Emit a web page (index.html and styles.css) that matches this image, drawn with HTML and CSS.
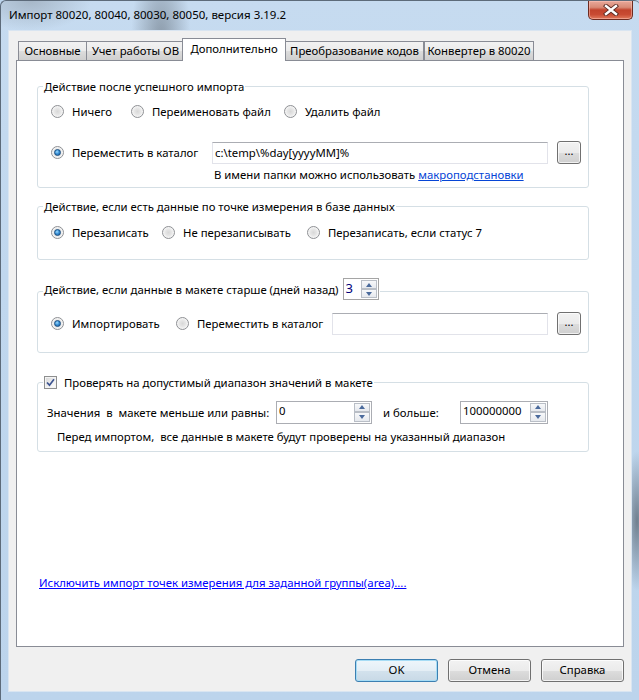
FILE: index.html
```html
<!DOCTYPE html>
<html lang="ru">
<head>
<meta charset="utf-8">
<title>Импорт</title>
<link rel="stylesheet" href="styles.css">
</head>
<body>
<div class="window">
  <div class="titlebar">
    <span class="title">Импорт 80020, 80040, 80030, 80050, версия 3.19.2</span>
    <div class="close">
      <svg width="16" height="12" viewBox="0 0 16 12">
        <path d="M3 2 L13 10 M13 2 L3 10" stroke="#5a2a22" stroke-width="4.2" stroke-linecap="square"/>
        <path d="M3 2 L13 10 M13 2 L3 10" stroke="#ffffff" stroke-width="2.4" stroke-linecap="square"/>
      </svg>
    </div>
  </div>
  <div class="client">
    <div class="tabs">
      <div class="tab t1">Основные</div>
      <div class="tab t2">Учет работы ОВ</div>
      <div class="tab active">Дополнительно</div>
      <div class="tab t4">Преобразование кодов</div>
      <div class="tab t5">Конвертер в 80020</div>
    </div>
    <div class="panel">
      <div class="group g1">
        <div class="legend">Действие после успешного импорта</div>
        <div class="row r1">
          <label class="opt w80"><span class="radio"></span><span>Ничего</span></label>
          <label class="opt w153"><span class="radio"></span><span>Переименовать файл</span></label>
          <label class="opt"><span class="radio"></span><span>Удалить файл</span></label>
        </div>
        <div class="row r2">
          <label class="opt w161"><span class="radio on"></span><span>Переместить в каталог</span></label>
          <div class="input wide">c:\temp\%day[yyyyMM]%</div>
          <div class="dots">...</div>
        </div>
        <div class="hint">В имени папки можно использовать <a class="macro" href="#">макроподстановки</a></div>
      </div>

      <div class="group g2">
        <div class="legend">Действие, если есть данные по точке измерения в базе данных</div>
        <div class="row r3">
          <label class="opt w111"><span class="radio on"></span><span>Перезаписать</span></label>
          <label class="opt w145"><span class="radio"></span><span>Не перезаписывать</span></label>
          <label class="opt"><span class="radio"></span><span>Перезаписать, если статус 7</span></label>
        </div>
      </div>

      <div class="group g3">
        <div class="legend tall"><span>Действие, если данные в макете старше (дней назад)</span>
          <div class="spin days"><span class="val">3</span><span class="spinbtns"><span class="sb up"></span><span class="sb down"></span></span></div>
        </div>
        <div class="row r4">
          <label class="opt w125"><span class="radio on"></span><span>Импортировать</span></label>
          <label class="opt w156"><span class="radio"></span><span>Переместить в каталог</span></label>
          <div class="input wide2"></div>
          <div class="dots">...</div>
        </div>
      </div>

      <div class="group g4">
        <div class="legend chk">
          <span class="checkbox"><svg width="9" height="9" viewBox="0 0 9 9"><path d="M1 4.5 L3.5 7.2 L8 1.2" fill="none" stroke="#3e5591" stroke-width="1.7"/></svg></span>
          <span>Проверять на допустимый диапазон значений в макете</span>
        </div>
        <div class="row r5">
          <span class="lbl1">Значения&nbsp; в&nbsp; макете меньше или равны:</span>
          <div class="spin s1"><span class="val">0</span><span class="spinbtns"><span class="sb up"></span><span class="sb down"></span></span></div>
          <span class="lbl2">и больше:</span>
          <div class="spin s2"><span class="val">100000000</span><span class="spinbtns"><span class="sb up"></span><span class="sb down"></span></span></div>
        </div>
        <div class="note">Перед импортом,&nbsp; все данные в макете будут проверены на указанный диапазон</div>
      </div>

      <a class="bottomlink" href="#">Исключить импорт точек измерения для заданной группы(area)....</a>
    </div>
    <div class="buttons">
      <div class="btn default">OK</div>
      <div class="btn">Отмена</div>
      <div class="btn">Справка</div>
    </div>
  </div>
</div>
</body>
</html>
```
FILE: styles.css
```css
html, body {
  margin: 0;
  padding: 0;
  overflow: hidden;
  background: #bcd4ec;
}
body {
  font-family: "Noto Sans", "Open Sans", sans-serif;
  font-size: 11.35px;
  color: #000;
}
.window {
  width: 640px;
  height: 700px;
  box-sizing: border-box;
  display: flex;
  flex-direction: column;
  padding: 0 0 8px 0;
  border-left: 1px solid #5d6b7a;
  border-top: 1px solid #5d6b7a;
  border-radius: 6px 6px 0 0;
  background:
    radial-gradient(ellipse 30px 90px at 160px 40px, rgba(90,100,110,0.55), rgba(90,100,110,0) 100%),
    radial-gradient(ellipse 14px 70px at 636px 520px, rgba(60,70,80,0.6), rgba(60,70,80,0) 100%),
    radial-gradient(ellipse 60px 30px at 30px 0px, rgba(120,130,140,0.4), rgba(120,130,140,0) 100%),
    linear-gradient(180deg, #c6dbf0 0%, #c0d7ee 40%, #bcd4ec 100%);
}
.titlebar {
  height: 29px;
  display: flex;
  align-items: flex-start;
  justify-content: space-between;
  padding-left: 8px;
}
.title {
  margin-top: 6px;
  line-height: 16px;
  font-size: 11.5px;
  color: #000;
  white-space: nowrap;
}
.close {
  width: 45px;
  height: 19px;
  margin-right: 7px;
  box-sizing: border-box;
  border: 1px solid #6d2b20;
  border-top: none;
  border-radius: 0 0 5px 5px;
  background: linear-gradient(180deg, #e9a99a 0%, #d88a76 35%, #c2432c 50%, #c94b33 75%, #e07a5c 100%);
  box-shadow: inset 0 0 0 1px rgba(255,200,190,0.5);
  display: flex;
  align-items: center;
  justify-content: center;
}
.client {
  margin-left: 7px;
  width: 624px;
  height: 662px;
  box-sizing: border-box;
  border: 1px solid #d9e5f1;
  background: #f0f0f0;
  display: flex;
  flex-direction: column;
  padding: 7px 7px 0 7px;
}
.tabs {
  display: flex;
  align-items: flex-end;
  height: 22px;
  padding-left: 2px;
  position: relative;
  z-index: 2;
}
.tab {
  height: 19px;
  box-sizing: border-box;
  border: 1px solid #898c95;
  border-bottom: none;
  background: linear-gradient(180deg, #f2f2f2 0%, #ebebeb 50%, #dddddd 51%, #cfcfcf 100%);
  line-height: 18px;
  padding: 0;
  text-align: center;
  white-space: nowrap;
  margin-right: -1px;
}
.tab.t1 { width: 69px; }
.tab.t2 { width: 99px; }
.tab.t4 { width: 139px; margin-left: 1px; }
.tab.t5 { width: 110px; margin-left: 1px; }
.tab.active {
  height: 23px;
  width: 104px;
  margin: 0 -2px -1px -2px;
  background: #fff;
  line-height: 20px;
  position: relative;
  z-index: 3;
  border-color: #898c95;
}
.panel {
  height: 587px;
  box-sizing: border-box;
  border: 1px solid #898c95;
  background: #fff;
  display: flex;
  flex-direction: column;
  position: relative;
  z-index: 1;
}
.group {
  margin-left: 20px;
  width: 552px;
  box-sizing: border-box;
  border: 1px solid #d5dfe5;
  border-radius: 3px;
  display: flex;
  flex-direction: column;
  flex: none;
}
.legend {
  display: flex;
  align-items: center;
  align-self: flex-start;
  background: #fff;
  height: 16px;
  margin: -9px 0 0 5px;
  padding: 0 1px;
  white-space: nowrap;
}
.legend.tall {
  height: 22px;
  margin-top: -14px;
  gap: 4px;
}
.legend.chk {
  gap: 7px;
  margin-left: 5px;
}
.g1 { margin-top: 25px; height: 102px; }
.g2 { margin-top: 18px; height: 54px; }
.g3 { margin-top: 31px; height: 62px; }
.g4 { margin-top: 29px; height: 70px; }
.row {
  display: flex;
  align-items: center;
  padding-left: 13px;
  flex: none;
}
.r1 { margin-top: 7px; height: 20px; }
.r2 { margin-top: 20px; height: 23px; }
.r3 { margin-top: 8px; height: 20px; }
.r4 { margin-top: 12px; height: 23px; }
.r5 { margin-top: 10px; height: 24px; padding-left: 9px; }
.opt {
  display: flex;
  align-items: center;
  gap: 8px;
  white-space: nowrap;
  flex: none;
}
.w80 { width: 80px; }
.w153 { width: 153px; }
.w161 { width: 161px; }
.w111 { width: 111px; }
.w145 { width: 145px; }
.w125 { width: 125px; }
.w156 { width: 156px; }
.radio {
  width: 13px;
  height: 13px;
  box-sizing: border-box;
  border-radius: 50%;
  border: 1px solid #8e9094;
  background: radial-gradient(circle at 50% 50%, #d8d8d8 0, #e6e6e6 40%, #f6f6f6 70%, #fbfbfb 100%);
  display: flex;
  align-items: center;
  justify-content: center;
  flex: none;
}
.radio.on::after {
  content: "";
  width: 7px;
  height: 7px;
  border-radius: 50%;
  box-sizing: border-box;
  border: 1px solid #1b4f82;
  background: radial-gradient(circle at 40% 35%, #9fdcff 0, #3c93d8 45%, #155a9c 100%);
}
.input {
  height: 22px;
  box-sizing: border-box;
  border: 1px solid #e2e3ea;
  border-top-color: #abadb3;
  border-left-color: #e2e3ea;
  background: #fff;
  padding-left: 2px;
  line-height: 20px;
  white-space: nowrap;
}
.wide { width: 336px; }
.wide2 { width: 216px; }
.dots {
  width: 24px;
  height: 23px;
  box-sizing: border-box;
  margin-left: 9px;
  border: 1px solid #707070;
  border-radius: 3px;
  background: linear-gradient(180deg, #f2f2f2 0%, #ebebeb 50%, #dddddd 51%, #cfcfcf 100%);
  box-shadow: inset 0 0 0 1px rgba(255,255,255,0.7);
  text-align: center;
  line-height: 17px;
  font-size: 11px;
}
.hint {
  margin-top: 3px;
  height: 16px;
  line-height: 16px;
  padding-left: 176px;
  white-space: nowrap;
}
.macro {
  color: #0645d6;
  text-decoration: underline;
}
.spin {
  height: 23px;
  box-sizing: border-box;
  border: 1px solid #abadb3;
  background: #fff;
  display: flex;
  justify-content: space-between;
  flex: none;
}
.spin .val {
  padding-left: 2px;
  line-height: 17px;
  color: #000;
}
.spin.days {
  width: 36px;
  height: 22px;
  border-color: #a5a5a5;
}
.spin.days .val { color: #00007a; font-size: 13px; line-height: 18px; }
.spinbtns {
  display: flex;
  flex-direction: column;
  width: 16px;
  padding: 1px 1px 1px 0;
  gap: 0;
}
.sb {
  flex: 1;
  box-sizing: border-box;
  border: 1px solid #b9bec6;
  background: linear-gradient(180deg, #f7f8fa 0%, #e6e9ee 100%);
  display: flex;
  align-items: center;
  justify-content: center;
}
.sb.up::after {
  content: "";
  border-left: 3.5px solid transparent;
  border-right: 3.5px solid transparent;
  border-bottom: 4px solid #4a6a9c;
}
.sb.down::after {
  content: "";
  border-left: 3.5px solid transparent;
  border-right: 3.5px solid transparent;
  border-top: 4px solid #4a6a9c;
}
.s1 { width: 96px; }
.s2 { width: 88px; }
.lbl1 { width: 229px; white-space: nowrap; flex: none; }
.lbl2 { width: 77px; margin-left: 11px; white-space: nowrap; flex: none; }
.checkbox {
  width: 13px;
  height: 13px;
  box-sizing: border-box;
  border: 1px solid #8e8f8f;
  background: linear-gradient(135deg, #d4d4d4 0%, #f2f2f2 60%, #ffffff 100%);
  box-shadow: inset 0 0 0 1px #f4f4f4;
  display: flex;
  align-items: center;
  justify-content: center;
  flex: none;
}
.note {
  margin-top: 5px;
  height: 16px;
  line-height: 16px;
  padding-left: 19px;
  white-space: nowrap;
}
.bottomlink {
  margin-top: 123px;
  margin-left: 22px;
  line-height: 16px;
  color: #0000ff;
  text-decoration: underline;
  align-self: flex-start;
  white-space: nowrap;
}
.buttons {
  display: flex;
  justify-content: flex-end;
  gap: 10px;
  margin-top: 12px;
}
.btn {
  width: 83px;
  height: 23px;
  box-sizing: border-box;
  border: 1px solid #707070;
  border-radius: 3px;
  background: linear-gradient(180deg, #f2f2f2 0%, #ebebeb 50%, #dddddd 51%, #cfcfcf 100%);
  box-shadow: inset 0 0 0 1px rgba(255,255,255,0.75);
  text-align: center;
  line-height: 20px;
}
.btn.default {
  border-color: #3c7fb1;
  box-shadow: inset 0 0 0 1px #a6dcf5;
  background: linear-gradient(180deg, #eef6fb 0%, #e4eef5 50%, #d3e2ed 51%, #c8d9e6 100%);
}
```
